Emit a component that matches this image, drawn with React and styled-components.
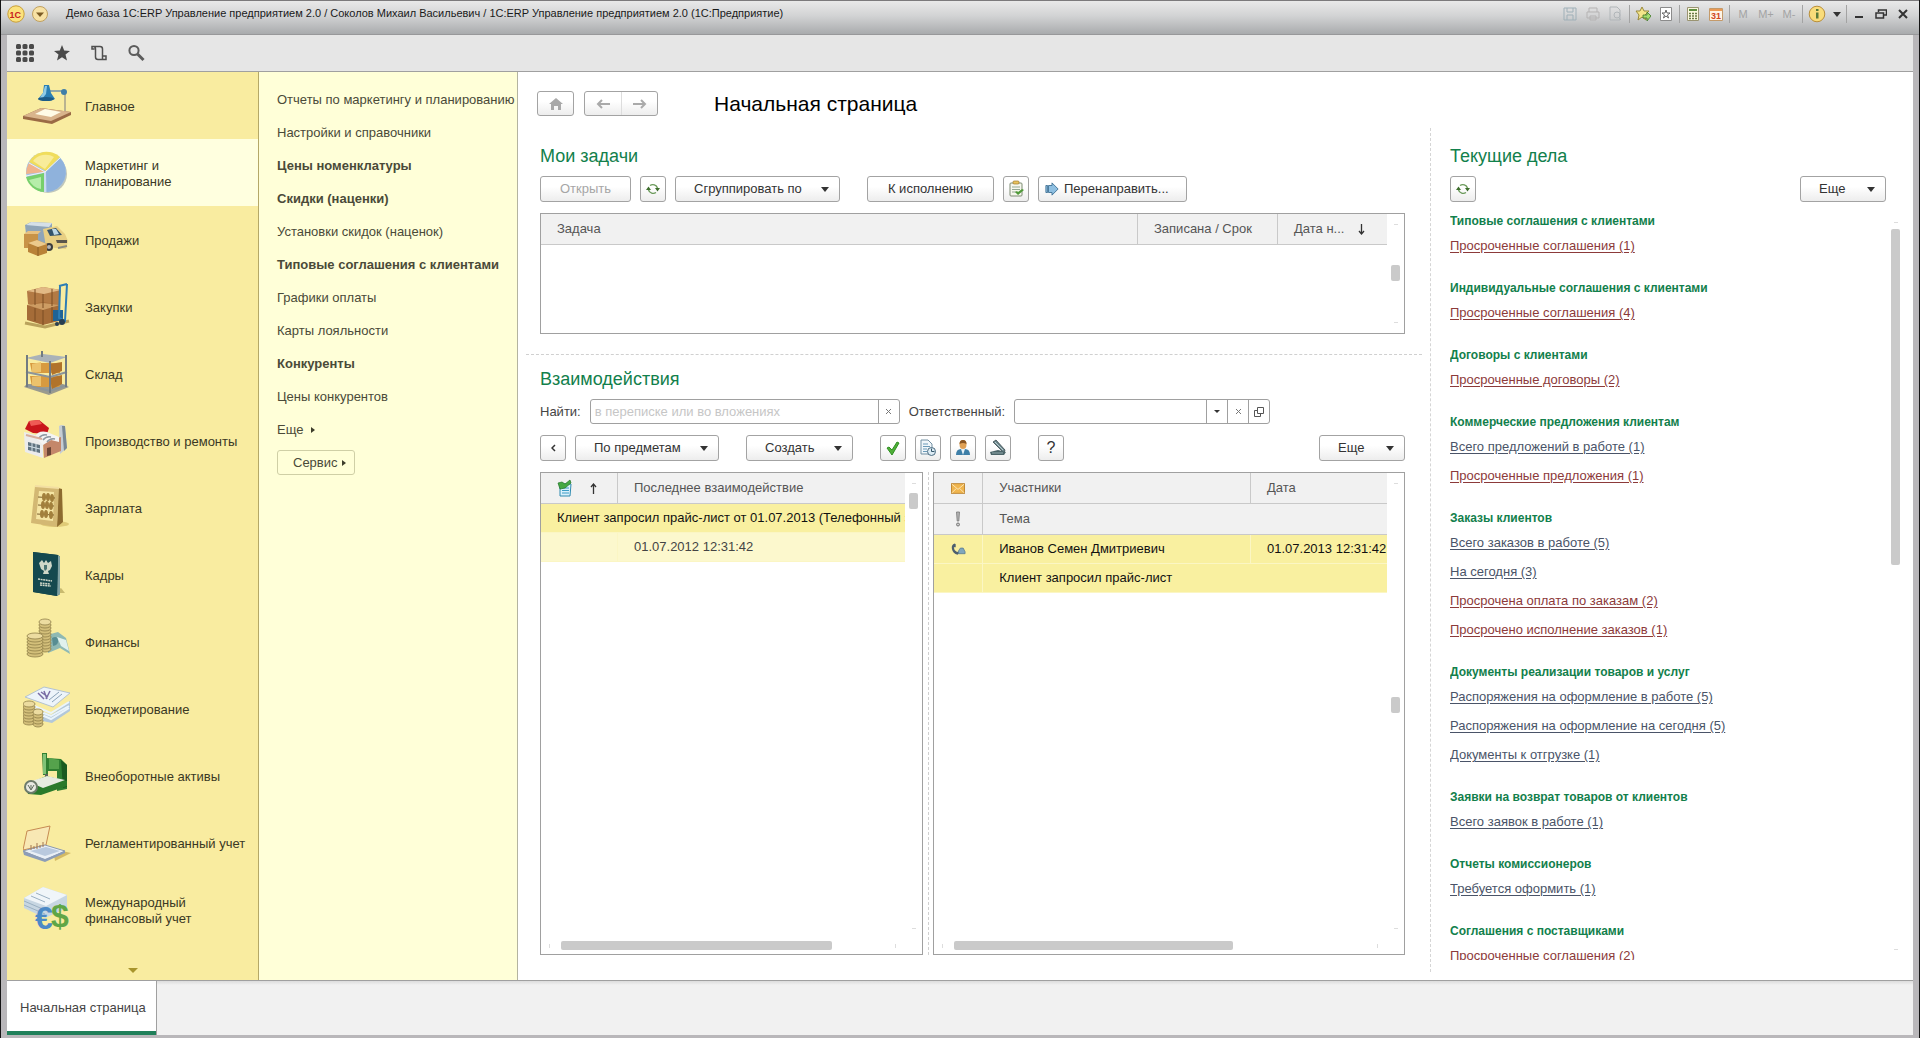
import React from 'react';
import styled, { createGlobalStyle } from 'styled-components';

/* ---------- section icons ---------- */

const LampIcon = () => (
  <svg viewBox="0 0 48 48" width="48" height="48">
    <path d="M0 34 L18 26 L48 30 L48 33 L29 42 L0 37z" fill="#9a6a45" />
    <path d="M0 34 L18 26 L48 30 L28 39z" fill="#d9b48c" />
    <path d="M12 32 L22 27 L38 30 L28 35z" fill="#fffbe6" />
    <path d="M42 12v17" stroke="#a3a08c" strokeWidth="1.500" />
    <path d="M26 9h14" stroke="#7193ab" strokeWidth="1.500" />
    <circle cx="41" cy="10" r="3" fill="#3f7ea8" />
    <path d="M21 3h5l2 8 4 6q-8 4-17 0l5-6z" fill="#2a7fb4" />
    <path d="M22 4h2l-1 8-4 5h-3l4-6z" fill="#8fcbe6" />
    <ellipse cx="23" cy="17" rx="8" ry="2" fill="#1d5c88" />
  </svg>
);

const PieIcon = () => (
  <svg viewBox="0 0 48 48" width="48" height="48">
    <ellipse cx="25" cy="25" rx="19" ry="19" fill="#7f8e98" opacity="0.500" />
    <circle cx="23" cy="23" r="20" fill="#a7c4e6" />
    <path d="M23 23 L37 9 A20 20 0 0 1 24 43z" fill="#8fb2dc" />
    <path d="M23 22 L6 13 A20 20 0 0 1 37 8z" fill="#f0dd5c" />
    <path d="M22 20 L10 12 A16 16 0 0 1 31 8z" fill="#f8ec9a" />
    <path d="M22 23 L6 14 Q3 19 3 25z" fill="#f0b38c" />
    <path d="M21 24 L3 28 A20 20 0 0 0 21 43z" fill="#77cf6b" />
    <path d="M18 28 L6 31 A16 16 0 0 0 18 40z" fill="#b6edaa" />
    <path d="M22 23 L37 9M22 23v20M22 23 L6 14M22 23 L3 27" stroke="#fff" strokeWidth="1" opacity="0.8" />
  </svg>
);

const TruckIcon = () => (
  <svg viewBox="0 0 48 48" width="48" height="48">
    <path d="M2 9 L8 6 L29 7 L29 30 L4 27z" fill="#8fa5b8" />
    <path d="M8 6 L29 7 L26 11 L3 9z" fill="#d5e0e8" />
    <path d="M20 13 L34 10 L42 18 L45 25 L43 33 L23 31z" fill="#e8cf83" />
    <path d="M24 14 L33 12 L39 19 L27 20z" fill="#33536b" />
    <path d="M29 13l4 0 3 5-5 1z" fill="#bcd7e6" />
    <path d="M33 24h11v3H34z" fill="#5a564c" />
    <circle cx="26" cy="31" r="4" fill="#3c3c3c" />
    <circle cx="26" cy="31" r="2" fill="#b5b5b5" />
    <path d="M35 32l9-2" stroke="#8c8c80" strokeWidth="2" />
    <path d="M1 18h14v14H1z" fill="#c89347" />
    <path d="M1 18l4-3h13l-3 3z" fill="#e8c17f" />
    <path d="M5 27 L14 24 L24 28 L24 37 L15 40 L5 36z" fill="#b98238" />
    <path d="M5 27 L14 24 L24 28 L15 31z" fill="#ecca8c" />
    <path d="M15 31v9" stroke="#8c5f24" />
  </svg>
);

const BoxesIcon = () => (
  <svg viewBox="0 0 48 48" width="48" height="48">
    <path d="M2 40 L22 44 L46 38" stroke="#b9a25c" strokeWidth="3" fill="none" />
    <path d="M4 8 L20 4 L38 7 L36 22 L20 25 L5 21z" fill="#b37a44" />
    <path d="M4 8 L20 4 L38 7 L21 11z" fill="#e2b985" />
    <path d="M4 22 L20 19 L37 22 L36 38 L20 42 L4 37z" fill="#a56c38" />
    <path d="M4 22 L20 20 L37 22 L20 27z" fill="#cd9c63" />
    <path d="M20 11v14M20 27v15M12 6v16M12 25v13M29 6v17M29 24v15" stroke="#7b4c22" strokeWidth="1" />
    <path d="M30 27h10v11H30z" fill="#1f6396" />
    <path d="M36 3l8-2M37 3l-1 32 6 3 2-37" stroke="#2d7db5" strokeWidth="2" fill="none" />
    <circle cx="39" cy="39" r="3" fill="#283e50" />
    <circle cx="34" cy="41" r="2" fill="#283e50" />
  </svg>
);

const ShelfIcon = () => (
  <svg viewBox="0 0 48 48" width="48" height="48">
    <path d="M1 37 L26 45 L46 37 L40 34 L4 34z" fill="#9a9a8e" />
    <path d="M7 13h30v10H9zM7 26h30v11H9z" fill="#d79a3f" />
    <path d="M9 14 L18 12 L18 22 L9 23zM9 27 L18 26 L18 36 L9 36z" fill="#ecc26c" />
    <path d="M27 14l12-2v9l-10 4zM27 28l12-3v9l-10 5z" fill="#b1732a" />
    <path d="M3 8 L20 4 L44 7 L27 13z" fill="#aab2b8" />
    <path d="M3 22 L27 27 L44 22M3 35 L27 41 L44 35" stroke="#8b949a" strokeWidth="2" fill="none" />
    <path d="M4 5v32M27 11v32M43 5v32M19 1v6" stroke="#717b82" strokeWidth="2" />
  </svg>
);

const FactoryIcon = () => (
  <svg viewBox="0 0 48 48" width="48" height="48">
    <path d="M36 9q3-2 6 0l2 22-7 6z" fill="#c6cdd4" />
    <path d="M39 9h3l2 22-3 3z" fill="#7a8893" />
    <path d="M1 15 L20 20 L20 41 L2 35z" fill="#ececec" />
    <path d="M20 25 L38 20 L38 34 L21 41z" fill="#c4876a" />
    <path d="M2 12 L6 4 L16 3 L26 11 L24 17 L10 16z" fill="#c9151b" />
    <path d="M6 4 L16 3 L19 7 L8 9z" fill="#ef5a55" />
    <path d="M12 20q3-7 12-5l12 5v5l-8-2-8 5z" fill="#f4f4f4" />
    <path d="M16 21q3-4 8-3M20 23q3-4 8-3M24 25q3-4 8-3" stroke="#8d97a1" fill="none" strokeWidth="1.5" />
    <path d="M5 25l12 3v8L5 33z" fill="#60737f" />
    <path d="M9 26v8M13 27v8M5 29l12 3" stroke="#d5e2ea" />
    <path d="M3 18l16 4" stroke="#d8ad9a" strokeWidth="2" />
    <path d="M24 31l4-1v8l-4 1z" fill="#6b4536" />
  </svg>
);

const AbacusIcon = () => (
  <svg viewBox="0 0 48 48" width="48" height="48">
    <ellipse cx="32" cy="40" rx="14" ry="3" fill="#c7a94e" opacity="0.5" />
    <path d="M35 4 L39 5 L40 38 L34 43z" fill="#8d6b2f" />
    <path d="M12 2 L36 4 L34 43 L8 39z" fill="#d3b873" />
    <path d="M16 7 L31 8 L30 37 L13 35z" fill="#f5e5a3" />
    <path d="M12 2 L36 4" stroke="#f3dfa2" strokeWidth="2" />
    <path d="M15 13l17 1M15 21l16 1M14 30l17 1" stroke="#7b5f2d" />
    <g fill="#a2803c">
      <ellipse cx="21" cy="13" rx="2" ry="4" /><ellipse cx="25" cy="13" rx="2" ry="4" /><ellipse cx="29" cy="14" rx="2" ry="4" />
      <ellipse cx="20" cy="21" rx="2" ry="4" /><ellipse cx="24" cy="21" rx="2" ry="4" /><ellipse cx="28" cy="22" rx="2" ry="4" />
      <ellipse cx="19" cy="30" rx="2" ry="4" /><ellipse cx="23" cy="30" rx="2" ry="4" /><ellipse cx="28" cy="31" rx="2" ry="4" />
    </g>
  </svg>
);

const PassportIcon = () => (
  <svg viewBox="0 0 48 48" width="48" height="48">
    <path d="M30 42l12 0-4-5z" fill="#a9994e" opacity="0.6" />
    <path d="M10 1 L35 4 L37 6 L37 43 L34 45 L10 41z" fill="#0f3f45" />
    <path d="M35 4l2 2v37l-3 2z" fill="#7fa0a0" />
    <path d="M10 1 L35 4 L34 45 L10 41z" fill="#15494f" />
    <path d="M16 12l3-3 2 3 2-3 2 3 3-2 1 5-2 4-2 1 1 3h-6l1-3-3-2z" fill="#cfd7c8" />
    <path d="M21 14h3v4l-2 2-1-2z" fill="#4a7472" />
    <path d="M15 28l14 2M17 32l10 1M17 34l11 1" stroke="#cfd7c8" strokeWidth="1.5" strokeDasharray="2 0.6" />
  </svg>
);

const Coins = ({ x, y, count, rx = 7 }) => (
  <g>
    {Array.from({ length: count }, (_, i) => (
      <ellipse key={i} cx={x} cy={y - i * 3} rx={rx} ry="3" fill={i === count - 1 ? '#ecdca0' : '#d3bf7a'} stroke="#8f7f47" strokeWidth="0.8" />
    ))}
  </g>
);

const FinanceIcon = () => (
  <svg viewBox="0 0 48 48" width="48" height="48">
    <path d="M24 17 L35 14 L43 20 L47 36 L37 30 L25 35z" fill="#8fb9b3" />
    <path d="M34 19l9 3 3 11-8-5z" fill="#e1f1ee" />
    <path d="M29 20q5-3 6 2t-5 6z" fill="#578d92" />
    <Coins x={22} y={31} count={10} rx={6} />
    <Coins x={12} y={36} count={7} rx={8} />
  </svg>
);

const BudgetIcon = () => (
  <svg viewBox="0 0 48 48" width="48" height="48">
    <path d="M4 20 L28 30 L47 16 L47 26 L29 38 L10 34z" fill="#b3c8da" />
    <path d="M6 19l22 9 18-11M8 23l20 8 18-10M12 27l16 7 18-11" stroke="#eaf4fb" strokeWidth="2" fill="none" />
    <path d="M2 12 L21 2 L47 8 L30 22z" fill="#edf4fa" stroke="#b3c3d2" />
    <path d="M15 8l6 6M18 7l7 5M21 6l3 8M27 6l-4 8" stroke="#7a6da5" strokeWidth="1.5" />
    <path d="M26 15l10-8M29 17l10-8" stroke="#8aa2b8" />
    <Coins x={6} y={37} count={7} rx={6} />
    <Coins x={15} y={39} count={5} rx={5} />
  </svg>
);

const MachineIcon = () => (
  <svg viewBox="0 0 48 48" width="48" height="48">
    <path d="M19 1h5v5l14 1 6 6v24l-10 2V19h-9v4h-5z" fill="#2f7f31" />
    <path d="M20 2h3v20h-3z" fill="#80c277" />
    <path d="M26 6l10 2v9h-10z" fill="#55a24c" />
    <path d="M38 8l6 5v22l-4 1z" fill="#1c5a20" />
    <path d="M22 22h3v6h-3z" fill="#5f625c" />
    <path d="M3 33 L23 24 L44 29 L44 34 L18 43 L5 42z" fill="#2a7a2b" />
    <path d="M6 30 L24 24 L42 28 L20 36z" fill="#e6ebe0" />
    <circle cx="8" cy="35" r="6" fill="#e8e8e2" stroke="#6d7b6b" strokeWidth="2" />
    <path d="M5 33l3 5 3-5M8 33v4" stroke="#5d6b5c" fill="none" />
  </svg>
);

const ScannerIcon = () => (
  <svg viewBox="0 0 48 48" width="48" height="48">
    <path d="M30 30 L48 34 L32 42z" fill="#bb9a3e" opacity="0.6" />
    <path d="M0 31 L4 12 L27 7 L23 26z" fill="#f8e8b4" stroke="#c68a52" />
    <path d="M0 32 L22 26 L42 32 L22 41z" fill="#e9eff6" stroke="#8a98ad" />
    <path d="M0 32 L1 36 L22 43 L42 34 L42 32 L22 40z" fill="#8c9db8" />
    <path d="M7 32l16-4 14 4-15 5z" fill="#b9c9de" />
    <path d="M8 31v-5M11 30v-3M14 30v-6M17 29v-3M20 28v-5" stroke="#a3764e" />
  </svg>
);

const CurrencyIcon = () => (
  <svg viewBox="0 0 48 48" width="48" height="48">
    <path d="M1 12 L20 1 L44 9 L44 22 L22 32 L1 22z" fill="#c7d6e2" />
    <path d="M1 12 L20 1 L44 9 L23 20z" fill="#f0f5f9" />
    <path d="M1 15l21 9M1 19l21 9M8 10l14 6M13 7l14 6" stroke="#9ab0c2" />
    <text x="28" y="41" fontSize="32" fontWeight="700" fontFamily="Liberation Sans, sans-serif" fill="#5fa646">$</text>
    <text x="12" y="43" fontSize="32" fontWeight="700" fontFamily="Liberation Sans, sans-serif" fill="#4c89c6">€</text>
  </svg>
);

/* ---------- toolbar icons ---------- */

const Caret = () => (
  <svg viewBox="0 0 8 5" width="8" height="5"><path d="M0 0h8L4 5z" fill="#333" /></svg>
);

const RefreshIcon = () => (
  <svg viewBox="0 0 16 16" width="16" height="16">
    <path d="M5 4.500A5 5 0 0 1 12.500 7M11 11.500A5 5 0 0 1 3.500 9" stroke="#6b9a5a" strokeWidth="1.400" fill="none" />
    <path d="M10 7h5l-2.500 3.500zM1 9h5L3.500 5.500z" fill="#3f6f2e" />
  </svg>
);

const ClipboardIcon = () => (
  <svg viewBox="0 0 18 18" width="18" height="18">
    <rect x="3" y="3" width="12" height="13" rx="1" fill="#f6f8ee" stroke="#7c8a72" />
    <rect x="6" y="1" width="6" height="3" rx="1" fill="#e9c35f" stroke="#9d7d2a" strokeWidth="0.7" />
    <path d="M5 7h8M5 9.500h8M5 12h4" stroke="#93a892" />
    <path d="M8 12l3 3 6-5-2-1-4 3-1-1z" fill="#4f9a39" />
  </svg>
);

const ForwardIcon = () => (
  <svg viewBox="0 0 16 16" width="14" height="14">
    <path d="M1 4h2v8H1zM4 4h4V1l7 7-7 7v-3H4z" fill="#8fc0e2" stroke="#3d6f94" />
  </svg>
);

const CheckIcon = () => (
  <svg viewBox="0 0 18 18" width="18" height="18">
    <path d="M3 9l2-1 3 3 5-8 2 1-7 12z" fill="#4faf37" stroke="#2f8f22" />
  </svg>
);

const DocClockIcon = () => (
  <svg viewBox="0 0 18 18" width="18" height="18">
    <path d="M2 1h7l4 4v10H2z" fill="#f0f6fa" stroke="#7390a3" />
    <path d="M4 5h5M4 7.500h7M4 10h4M4 12.500h4" stroke="#6b9ab8" />
    <circle cx="12.500" cy="12.500" r="4" fill="#dcebf4" stroke="#4b6b80" />
    <path d="M12.500 9.500v3h3" stroke="#33566b" fill="none" />
  </svg>
);

const PersonIcon = () => (
  <svg viewBox="0 0 18 18" width="18" height="18">
    <path d="M2 16q0-6 5-6h4q5 0 5 6z" fill="#3e7fa8" />
    <path d="M7 10l2 6 2-6z" fill="#e5f1f8" />
    <ellipse cx="9" cy="5.500" rx="3.500" ry="4.500" fill="#e0a155" />
    <path d="M5.500 5q0-4 3.500-4t3.500 4q-3.500-2-7 0z" fill="#8a5623" />
  </svg>
);

const StaplerIcon = () => (
  <svg viewBox="0 0 18 18" width="18" height="18">
    <path d="M4 3l3-2 9 10-1 3z" fill="#6b858b" stroke="#38494d" strokeWidth="0.800" />
    <path d="M6 3l8 8" stroke="#b9cdd0" />
    <path d="M1 13l8-2 8 2-2 3H2z" fill="#4b6468" />
    <path d="M3 14h11" stroke="#93aaae" />
  </svg>
);

const NoteIcon = () => (
  <svg viewBox="0 0 16 18" width="16" height="18">
    <path d="M3 5h11l-1 12H3z" fill="#d9f0fb" stroke="#2f8bb0" />
    <path d="M5 9h7M5 11.500h7M5 14h7" stroke="#3a9cc6" />
    <path d="M1 4l4-1 3 2 5-4 1 3-6 5-5 1z" fill="#45a843" stroke="#23742a" strokeWidth="0.700" />
  </svg>
);

const MailIcon = () => (
  <svg viewBox="0 0 16 12" width="14" height="11">
    <rect x="0.500" y="0.500" width="15" height="11" fill="#f0b54e" stroke="#b9802b" />
    <path d="M1 1l7 6 7-6M1 11l5-5M15 11l-5-5" stroke="#fdeabf" fill="none" />
  </svg>
);

const AlertIcon = () => (
  <svg viewBox="0 0 8 16" width="8" height="16">
    <path d="M2.500 1h3L4.800 10H3.200z" fill="#b3b3b3" stroke="#777" strokeWidth="0.800" />
    <circle cx="4" cy="13.500" r="1.500" fill="#ccc" stroke="#777" />
  </svg>
);

const PhoneIcon = () => (
  <svg viewBox="0 0 16 14" width="15" height="14">
    <path d="M4 1Q0 2 1 7t6 6l2-2-2-1-1 0Q3 8 3 5l2 0V2z" fill="#4d5f6e" />
    <path d="M8 12V9l2-3h3l2 4v2z" fill="#7fa6bd" stroke="#54788d" strokeWidth="0.800" />
  </svg>
);

const HomeIcon = () => (
  <svg viewBox="0 0 14 12" width="14" height="12"><path d="M7 0l7 6h-2v6H9V8H5v4H2V6H0z" fill="#a9a9a9" /></svg>
);

const ArrowIcon = ({ back }) => (
  <svg viewBox="0 0 14 10" width="14" height="10">
    <path d={back ? 'M14 5H2M6 1L2 5l4 4' : 'M0 5h12M8 1l4 4-4 4'} stroke="#aaa" strokeWidth="2" fill="none" />
  </svg>
);

const SortIcon = ({ down }) => (
  <svg viewBox="0 0 7 11" width="7" height="11">
    <path d={down ? 'M3.500 0v10M1 7l2.500 3L6 7' : 'M3.500 11V1M1 4l2.500-3L6 4'} stroke="#333" strokeWidth="1.300" fill="none" />
  </svg>
);

const CrossIcon = () => (
  <svg viewBox="0 0 7 7" width="7" height="7"><path d="M1 1l5 5M6 1L1 6" stroke="#777" /></svg>
);

const OpenIcon = () => (
  <svg viewBox="0 0 10 10" width="10" height="10">
    <path d="M3.500 0.500h6v6h-6zM3 3.500H0.500v6h6V7" stroke="#555" fill="none" />
  </svg>
);

const RightMark = () => (
  <svg viewBox="0 0 4 6" width="4" height="6"><path d="M0 0l4 3-4 3z" fill="#3d3d2b" /></svg>
);

const GridIcon = () => (
  <svg viewBox="0 0 18 18" width="18" height="18" fill="#4a4a4a">
    {[0, 6.5, 13].map((y) => [0, 6.5, 13].map((x) => <rect key={`${x}-${y}`} x={x} y={y} width="5" height="5" rx="1.500" />))}
  </svg>
);

const StarIcon = () => (
  <svg viewBox="0 0 18 18" width="18" height="18">
    <path d="M9 1l2.200 5.500 5.800 .4-4.500 3.700L14 16.500 9 13.200 4 16.500l1.500-5.900L1 6.900l5.800-.4z" fill="#4a4a4a" />
  </svg>
);

const ScrollIcon = () => (
  <svg viewBox="0 0 18 18" width="18" height="18">
    <path d="M4.500 5H2V2.500h8q2.500 0 2.500 2.500v7H16v3.500H8q-2.500 0-2.500-2.500V5q0-2.500-2-2.500M12.500 12v3" stroke="#4f4f4f" strokeWidth="1.500" fill="none" />
  </svg>
);

const SearchIcon = () => (
  <svg viewBox="0 0 18 18" width="18" height="18">
    <circle cx="7" cy="6.500" r="4.600" stroke="#5c5c5c" strokeWidth="2" fill="none" />
    <path d="M10.500 10l6 6" stroke="#5c5c5c" strokeWidth="3" />
  </svg>
);

/* ---------- title bar icons ---------- */

const LogoIcon = () => (
  <svg viewBox="0 0 18 18" width="18" height="18">
    <circle cx="9" cy="9" r="8.200" fill="#fbe27c" stroke="#c99f38" />
    <text x="2.500" y="12.500" fontSize="9" fontWeight="700" fontFamily="Liberation Sans, sans-serif" fill="#c8201c">1С</text>
  </svg>
);

const MenuBubble = () => (
  <svg viewBox="0 0 18 18" width="18" height="18">
    <circle cx="9" cy="9" r="7.500" fill="#f8e2a4" stroke="#c0a060" />
    <path d="M5 7.500h8L9 12z" fill="#7b5b24" />
  </svg>
);

const SaveIcon = () => (
  <svg viewBox="0 0 16 16" width="16" height="16" fill="none" stroke="#9fb0b8">
    <path d="M2 2h12v12H2zM5 2v4h6V2M5 14V9h6v5" />
  </svg>
);

const PrintIcon = () => (
  <svg viewBox="0 0 16 16" width="16" height="16" fill="none" stroke="#b5b3b3">
    <path d="M4 6V2h8v4M2 6h12v6H2zM5 10h6v4H5z" />
  </svg>
);

const PreviewIcon = () => (
  <svg viewBox="0 0 16 16" width="16" height="16" fill="none" stroke="#b1b6b9">
    <path d="M2 1h7l3 3v10H2zM13 14l-3-3" /><circle cx="9" cy="9" r="3" />
  </svg>
);

const FavAddIcon = () => (
  <svg viewBox="0 0 16 16" width="16" height="16">
    <path d="M7 1l2 4 5 0-4 4 1 5-4-3-4 3 1-5-3-4h4z" fill="#f5e58a" stroke="#9a8a3a" />
    <path d="M8 9h4V6l4 4-4 5v-3H8z" fill="#a5dc6f" stroke="#3c7724" strokeWidth="0.800" />
  </svg>
);

const FavListIcon = () => (
  <svg viewBox="0 0 16 16" width="16" height="16">
    <path d="M2.500 1.500h11v13h-11z" fill="#fff" stroke="#8b8b8b" />
    <path d="M8 4l1 3h3L9.500 9l1 3L8 10l-2.500 2 1-3L4 7h3z" fill="none" stroke="#666" />
  </svg>
);

const CalcIcon = () => (
  <svg viewBox="0 0 16 16" width="16" height="16">
    <path d="M2.500 1.500h11v13h-11z" fill="#fbf8df" stroke="#9a9472" />
    <path d="M4 4h8" stroke="#5f8f3f" strokeWidth="2" />
    <path d="M4 7.500h8M4 10h8M4 12.500h8" stroke="#6a7a45" strokeWidth="1.500" strokeDasharray="2 1" />
  </svg>
);

const CalendarIcon = () => (
  <svg viewBox="0 0 16 16" width="16" height="16">
    <path d="M1.500 2.500h13v12h-13z" fill="#fff5e6" stroke="#c49a6a" />
    <path d="M2 3h12v2H2z" fill="#eb9a55" />
    <text x="3" y="13" fontSize="9" fontWeight="700" fontFamily="Liberation Sans, sans-serif" fill="#d0471e">31</text>
  </svg>
);

const InfoIcon = () => (
  <svg viewBox="0 0 18 18" width="18" height="18">
    <circle cx="9" cy="9" r="7.800" fill="#f9dc7a" stroke="#b98f3a" />
    <path d="M8 7.500h2.500v6H8zM8 4h2.500v2H8z" fill="#5a7a3a" />
  </svg>
);

/* ---------- data ---------- */

const sections = [
  { label: 'Главное', Icon: LampIcon },
  { label: 'Маркетинг и\nпланирование', Icon: PieIcon, active: true },
  { label: 'Продажи', Icon: TruckIcon },
  { label: 'Закупки', Icon: BoxesIcon },
  { label: 'Склад', Icon: ShelfIcon },
  { label: 'Производство и ремонты', Icon: FactoryIcon },
  { label: 'Зарплата', Icon: AbacusIcon },
  { label: 'Кадры', Icon: PassportIcon },
  { label: 'Финансы', Icon: FinanceIcon },
  { label: 'Бюджетирование', Icon: BudgetIcon },
  { label: 'Внеоборотные активы', Icon: MachineIcon },
  { label: 'Регламентированный учет', Icon: ScannerIcon },
  { label: 'Международный\nфинансовый учет', Icon: CurrencyIcon },
];

const commands = [
  { label: 'Отчеты по маркетингу и планированию' },
  { label: 'Настройки и справочники' },
  { label: 'Цены номенклатуры', bold: true },
  { label: 'Скидки (наценки)', bold: true },
  { label: 'Установки скидок (наценок)' },
  { label: 'Типовые соглашения с клиентами', bold: true },
  { label: 'Графики оплаты' },
  { label: 'Карты лояльности' },
  { label: 'Конкуренты', bold: true },
  { label: 'Цены конкурентов' },
];

const todo = [
  { title: 'Типовые соглашения с клиентами', links: [['Просроченные соглашения (1)', true]] },
  { title: 'Индивидуальные соглашения с клиентами', links: [['Просроченные соглашения (4)', true]] },
  { title: 'Договоры с клиентами', links: [['Просроченные договоры (2)', true]] },
  {
    title: 'Коммерческие предложения клиентам',
    links: [['Всего предложений в работе (1)'], ['Просроченные предложения (1)', true]],
  },
  {
    title: 'Заказы клиентов',
    links: [
      ['Всего заказов в работе (5)'],
      ['На сегодня (3)'],
      ['Просрочена оплата по заказам (2)', true],
      ['Просрочено исполнение заказов (1)', true],
    ],
  },
  {
    title: 'Документы реализации товаров и услуг',
    links: [
      ['Распоряжения на оформление в работе (5)'],
      ['Распоряжения на оформление на сегодня (5)'],
      ['Документы к отгрузке (1)'],
    ],
  },
  { title: 'Заявки на возврат товаров от клиентов', links: [['Всего заявок в работе (1)']] },
  { title: 'Отчеты комиссионеров', links: [['Требуется оформить (1)']] },
  { title: 'Соглашения с поставщиками', links: [['Просроченные соглашения (2)', true]] },
];

/* ---------- page ---------- */

const App = () => {
  return (
    <Window>
      <GlobalStyle />
      <TitleBar>
        <LogoIcon />
        <MenuBubble />
        <WindowTitle>
          Демо база 1С:ERP Управление предприятием 2.0 / Соколов Михаил Васильевич / 1С:ERP Управление предприятием 2.0{' '}
          (1С:Предприятие)
        </WindowTitle>
        <TitleTools>
          <ToolGroup><SaveIcon /><PrintIcon /><PreviewIcon /></ToolGroup>
          <ToolGroup><FavAddIcon /><FavListIcon /></ToolGroup>
          <ToolGroup><CalcIcon /><CalendarIcon /></ToolGroup>
          <ToolGroup><Memory>M</Memory><Memory>M+</Memory><Memory>M-</Memory></ToolGroup>
          <ToolGroup><InfoIcon /><Caret /></ToolGroup>
          <ToolGroup>
            <WindowButton aria-label="Свернуть">
              <svg viewBox="0 0 10 10" width="10" height="10"><path d="M1 8h8" stroke="#333" strokeWidth="2" /></svg>
            </WindowButton>
            <WindowButton aria-label="Развернуть">
              <svg viewBox="0 0 12 10" width="12" height="10">
                <path d="M3.500 3V1h8v5H9M1 4h7.500v5H1z" stroke="#333" strokeWidth="1.500" fill="none" />
              </svg>
            </WindowButton>
            <WindowButton aria-label="Закрыть">
              <svg viewBox="0 0 10 10" width="10" height="10"><path d="M1 1l8 8M9 1L1 9" stroke="#333" strokeWidth="2" /></svg>
            </WindowButton>
          </ToolGroup>
        </TitleTools>
      </TitleBar>

      <Frame>
        <MainTools>
          <PlainButton aria-label="Разделы"><GridIcon /></PlainButton>
          <PlainButton aria-label="Избранное"><StarIcon /></PlainButton>
          <PlainButton aria-label="История"><ScrollIcon /></PlainButton>
          <PlainButton aria-label="Поиск"><SearchIcon /></PlainButton>
        </MainTools>

        <Workspace>
          <Sections>
            {sections.map(({ label, Icon, active }) => (
              <Section key={label} href="#" $active={active}>
                <Icon />
                <SectionLabel>{label}</SectionLabel>
              </Section>
            ))}
            <MoreSections aria-label="Еще разделы">
              <svg viewBox="0 0 10 5" width="10" height="5"><path d="M0 0h10L5 5z" fill="#a8942c" /></svg>
            </MoreSections>
          </Sections>

          <Commands>
            {commands.map(({ label, bold }) => (
              <Command key={label} href="#" $bold={bold}>{label}</Command>
            ))}
            <Command href="#">Еще <RightMark /></Command>
            <ServiceButton>Сервис <RightMark /></ServiceButton>
          </Commands>

          <Content>
            <NavRow>
              <HomeButton aria-label="Домой"><HomeIcon /></HomeButton>
              <NavPair>
                <NavButton aria-label="Назад"><ArrowIcon back /></NavButton>
                <NavButton aria-label="Вперед"><ArrowIcon /></NavButton>
              </NavPair>
              <PageTitle>Начальная страница</PageTitle>
            </NavRow>

            <Panels>
              <LeftPanel>
                <Block>
                  <Heading>Мои задачи</Heading>
                  <Bar>
                    <Button $width={91} disabled>Открыть</Button>
                    <IconButton aria-label="Обновить"><RefreshIcon /></IconButton>
                    <MenuButton $width={165}>Сгруппировать по <Caret /></MenuButton>
                    <Gap />
                    <Button $width={127}>К исполнению</Button>
                    <IconButton aria-label="Выполнено"><ClipboardIcon /></IconButton>
                    <ForwardButton $width={149}><ForwardIcon /> Перенаправить...</ForwardButton>
                  </Bar>
                  <TasksBox>
                    <GridArea>
                      <Table>
                        <colgroup><col /><Col $width={140} /><Col $width={109} /></colgroup>
                        <thead>
                          <tr>
                            <Th>Задача</Th>
                            <Th>Записана / Срок</Th>
                            <Th><HeadSort>Дата н... <SortIcon down /></HeadSort></Th>
                          </tr>
                        </thead>
                      </Table>
                    </GridArea>
                    <Track><TrackMark /><Thumb $top={36} /><TrackMark $end /></Track>
                  </TasksBox>
                </Block>

                <Separator />

                <Block $grow>
                  <Heading>Взаимодействия</Heading>
                  <FilterBar>
                    <FieldLabel htmlFor="find">Найти:</FieldLabel>
                    <Field $width={310}>
                      <Input id="find" placeholder="в переписке или во вложениях" />
                      <FieldButton aria-label="Очистить поиск"><CrossIcon /></FieldButton>
                    </Field>
                    <FieldLabel htmlFor="owner">Ответственный:</FieldLabel>
                    <Field $width={256}>
                      <Input id="owner" />
                      <FieldButton aria-label="Выбрать"><svg viewBox="0 0 6 3" width="6" height="3"><path d="M0 0h6L3 3z" fill="#333" /></svg></FieldButton>
                      <FieldButton aria-label="Очистить"><CrossIcon /></FieldButton>
                      <FieldButton aria-label="Открыть"><OpenIcon /></FieldButton>
                    </Field>
                  </FilterBar>
                  <Bar>
                    <IconButton aria-label="Скрыть">
                      <svg viewBox="0 0 5 8" width="5" height="8"><path d="M4 1L1 4l3 3" stroke="#333" strokeWidth="1.500" fill="none" /></svg>
                    </IconButton>
                    <MenuButton $width={144}>По предметам <Caret /></MenuButton>
                    <Gap />
                    <MenuButton $width={107}>Создать <Caret /></MenuButton>
                    <Gap />
                    <IconButton aria-label="Рассмотрено"><CheckIcon /></IconButton>
                    <IconButton aria-label="Рассмотреть после"><DocClockIcon /></IconButton>
                    <IconButton aria-label="Ответственный"><PersonIcon /></IconButton>
                    <IconButton aria-label="Вложения"><StaplerIcon /></IconButton>
                    <Gap />
                    <IconButton>?</IconButton>
                    <Spring />
                    <MenuButton $width={86}>Еще <Caret /></MenuButton>
                  </Bar>
                  <Lists>
                    <ListBox>
                      <ListBody>
                        <GridArea>
                          <Table>
                            <colgroup><Col $width={77} /><col /></colgroup>
                            <thead>
                              <tr>
                                <Th><HeadIcons><NoteIcon /><SortIcon /></HeadIcons></Th>
                                <Th>Последнее взаимодействие</Th>
                              </tr>
                            </thead>
                            <tbody>
                              <tr><Td colSpan={2} $tone="strong">Клиент запросил прайс-лист от 01.07.2013 (Телефонный звонок)</Td></tr>
                              <tr><Td /><Td>01.07.2012 12:31:42</Td></tr>
                            </tbody>
                          </Table>
                        </GridArea>
                        <Track><TrackMark /><Thumb $top={5} /><TrackMark $end /></Track>
                      </ListBody>
                      <HTrack><HMark /><HThumb $share={78} /><HMark $end /></HTrack>
                    </ListBox>
                    <Splitter />
                    <ListBox>
                      <ListBody>
                        <GridArea>
                          <Table>
                            <colgroup><Col $width={49} /><col /><Col $width={136} /></colgroup>
                            <thead>
                              <tr><Th $center><MailIcon /></Th><Th>Участники</Th><Th>Дата</Th></tr>
                              <tr><Th $center><AlertIcon /></Th><Th colSpan={2}>Тема</Th></tr>
                            </thead>
                            <tbody>
                              <tr>
                                <Td $tone="strong" $center><PhoneIcon /></Td>
                                <Td $tone="strong">Иванов Семен Дмитриевич</Td>
                                <Td $tone="strong">01.07.2013 12:31:42</Td>
                              </tr>
                              <tr><Td $tone="strong" /><Td $tone="strong" colSpan={2}>Клиент запросил прайс-лист</Td></tr>
                            </tbody>
                          </Table>
                        </GridArea>
                        <Track><TrackMark /><Thumb $top={209} /><TrackMark $end /></Track>
                      </ListBody>
                      <HTrack><HMark /><HThumb $share={64} /><HMark $end /></HTrack>
                    </ListBox>
                  </Lists>
                </Block>
              </LeftPanel>

              <RightPanel>
                <Heading>Текущие дела</Heading>
                <TodoBar>
                  <IconButton aria-label="Обновить"><RefreshIcon /></IconButton>
                  <MenuButton $width={86}>Еще <Caret /></MenuButton>
                </TodoBar>
                <TodoArea>
                  <TodoList>
                    {todo.map(({ title, links }) => (
                      <TodoGroup key={title}>
                        <TodoTitle>{title}</TodoTitle>
                        {links.map(([text, overdue]) => (
                          <TodoItem key={text}><TodoLink href="#" $overdue={overdue}>{text}</TodoLink></TodoItem>
                        ))}
                      </TodoGroup>
                    ))}
                  </TodoList>
                  <Track><TrackMark /><Thumb $top={2} $height={336} /><TrackMark $end /></Track>
                </TodoArea>
              </RightPanel>
            </Panels>
          </Content>
        </Workspace>

        <TabBar>
          <Tab>Начальная страница</Tab>
        </TabBar>
      </Frame>
    </Window>
  );
};

const GlobalStyle = createGlobalStyle`
  * {
    box-sizing: border-box;
  }
  body {
    margin: 0;
    font-family: 'Liberation Sans', Arial, sans-serif;
    font-size: 13px;
    line-height: 16px;
    color: #404040;
  }
  button, input {
    font: inherit;
    color: inherit;
  }
  svg {
    display: block;
    flex: none;
  }
`;

const Window = styled.div`
  display: flex;
  flex-direction: column;
  height: 100vh;
  background-color: #b9b7ba;
  border: solid #141414;
  border-width: 0 1px 0 1px;
`;

const TitleBar = styled.header`
  display: flex;
  align-items: flex-start;
  gap: 6px;
  height: 35px;
  padding: 4px 4px 0 6px;
  border-top: 1px solid #7c7a7c;
  border-bottom: 1px solid #98989a;
  background: linear-gradient(#e9e9e9, #d2d3d4 45%, #a9abad);
`;

const WindowTitle = styled.div`
  flex: 1;
  min-width: 0;
  padding-left: 11px;
  font-size: 11px;
  color: #1a1a1a;
  white-space: nowrap;
  overflow: hidden;
`;

const TitleTools = styled.div`
  display: flex;
`;

const ToolGroup = styled.div`
  display: flex;
  align-items: center;
  gap: 7px;
  height: 18px;
  padding: 0 5px;
  & + & {
    border-left: 1px solid #a3a3a3;
  }
`;

const Memory = styled.span`
  width: 16px;
  font-size: 11px;
  text-align: center;
  color: #a3a3a3;
`;

const PlainButton = styled.button`
  display: flex;
  padding: 0;
  border: 0;
  background: none;
`;

const WindowButton = styled(PlainButton)`
  padding: 0 2px;
`;

const Frame = styled.div`
  flex: 1;
  min-height: 0;
  display: flex;
  flex-direction: column;
  margin: 0 6px 3px;
`;

const MainTools = styled.div`
  display: flex;
  align-items: center;
  gap: 19px;
  height: 37px;
  padding-left: 9px;
  background-color: #e6e6e6;
  border-bottom: 1px solid #a0a0a0;
`;

const Workspace = styled.div`
  flex: 1;
  min-height: 0;
  display: flex;
  border-bottom: 1px solid #a0a0a0;
`;

const Sections = styled.nav`
  flex: none;
  width: 252px;
  display: flex;
  flex-direction: column;
  background-color: #f9eca0;
  border-right: 1px solid #b5a868;
  overflow: hidden;
`;

const Section = styled.a`
  flex: none;
  display: flex;
  align-items: center;
  gap: 14px;
  height: 67px;
  padding-left: 16px;
  color: #3a3824;
  text-decoration: none;
  background-color: ${(props) => (props.$active ? '#ffffdf' : 'transparent')};
`;

const SectionLabel = styled.span`
  padding-top: 2px;
  white-space: pre-line;
`;

const MoreSections = styled(PlainButton)`
  flex: 1;
  align-items: center;
  justify-content: center;
  padding-top: 18px;
`;

const Commands = styled.nav`
  flex: none;
  width: 259px;
  display: flex;
  flex-direction: column;
  align-items: flex-start;
  padding: 11px 0 0 18px;
  background-color: #ffffd8;
  border-right: 1px solid #b4b4a0;
`;

const Command = styled.a`
  display: flex;
  align-items: center;
  gap: 8px;
  height: 33px;
  color: #4a4a38;
  font-weight: ${(props) => (props.$bold ? 700 : 400)};
  text-decoration: none;
  white-space: nowrap;
`;

const ServiceButton = styled.button`
  display: flex;
  align-items: center;
  gap: 4px;
  height: 25px;
  margin-top: 4px;
  padding: 0 8px 0 15px;
  border: 1px solid #cfcfa6;
  border-radius: 3px;
  background: none;
  color: #4a4a38;
`;

const Content = styled.main`
  flex: 1;
  min-width: 0;
  display: flex;
  flex-direction: column;
  padding-top: 19px;
  background-color: #fff;
`;

const NavRow = styled.div`
  display: flex;
  align-items: center;
  height: 25px;
  margin-bottom: 12px;
  padding-left: 19px;
`;

const Button = styled.button`
  flex: none;
  display: flex;
  align-items: center;
  justify-content: center;
  width: ${(props) => props.$width}px;
  height: 26px;
  padding: 0;
  border: 1px solid #a3a3a3;
  border-radius: 3px;
  background: linear-gradient(#fff 40%, #ededed);
  color: #333;
  white-space: nowrap;
  &:disabled {
    color: #a6a6a6;
  }
`;

const IconButton = styled(Button)`
  width: 26px;
  font-size: 16px;
`;

const HomeButton = styled(Button)`
  width: 37px;
  height: 25px;
`;

const MenuButton = styled(Button)`
  justify-content: space-between;
  padding: 0 10px 0 18px;
`;

const ForwardButton = styled(Button)`
  justify-content: flex-start;
  gap: 5px;
  padding-left: 6px;
`;

const NavPair = styled.div`
  display: flex;
  height: 25px;
  margin-left: 10px;
  border: 1px solid #a3a3a3;
  border-radius: 3px;
  background: linear-gradient(#fff 40%, #ededed);
`;

const NavButton = styled(PlainButton)`
  width: 36px;
  align-items: center;
  justify-content: center;
  & + & {
    border-left: 1px solid #ddd;
  }
`;

const PageTitle = styled.h1`
  margin: 0 0 0 56px;
  font-size: 21px;
  font-weight: 400;
  line-height: 24px;
  color: #000;
`;

const Panels = styled.div`
  flex: 1;
  min-height: 0;
  display: flex;
`;

const LeftPanel = styled.div`
  flex: 1;
  min-width: 0;
  display: flex;
  flex-direction: column;
  margin-bottom: 8px;
  padding: 16px 8px 17px;
  border-right: 1px dashed #d5d5d5;
`;

const Block = styled.section`
  display: flex;
  flex-direction: column;
  flex: ${(props) => (props.$grow ? '1' : 'none')};
  min-height: 0;
  padding: 0 17px 0 14px;
`;

const Separator = styled.div`
  flex: none;
  margin: 20px 0 12px;
  border-top: 1px dashed #d0d0d0;
`;

const Heading = styled.h2`
  margin: 0 0 8px;
  font-size: 18px;
  font-weight: 400;
  line-height: 24px;
  color: #12804c;
`;

const Bar = styled.div`
  flex: none;
  display: flex;
  gap: 9px;
  margin-bottom: 11px;
`;

const FilterBar = styled(Bar)`
  align-items: center;
`;

const Gap = styled.div`
  width: 9px;
`;

const Spring = styled.div`
  flex: 1;
`;

const TasksBox = styled.div`
  display: flex;
  height: 121px;
  border: 1px solid #a0a0a0;
`;

const GridArea = styled.div`
  flex: 1;
  min-width: 0;
  overflow: hidden;
`;

const Table = styled.table`
  width: 100%;
  table-layout: fixed;
  border-collapse: separate;
  border-spacing: 0;
`;

const Col = styled.col`
  width: ${(props) => props.$width}px;
`;

const Th = styled.th`
  height: 31px;
  padding: ${(props) => (props.$center ? '0' : '0 0 0 16px')};
  background-color: #f1f1f1;
  border: solid #c9c9c9;
  border-width: 0 1px 1px 0;
  font-weight: 400;
  text-align: left;
  white-space: nowrap;
  color: #555;
  &:last-child {
    border-right: 0;
  }
  & > svg {
    margin: ${(props) => (props.$center ? '0 auto' : '0')};
  }
`;

const Td = styled.td`
  height: 29px;
  padding: ${(props) => (props.$center ? '0' : '0 0 0 16px')};
  background-color: ${(props) => (props.$tone === 'strong' ? '#f9f0a0' : '#fcf8cd')};
  border: solid #fbf6c4;
  border-width: 0 1px 1px 0;
  color: ${(props) => (props.$tone === 'strong' ? '#111' : '#444')};
  white-space: nowrap;
  overflow: hidden;
  &:last-child {
    border-right: 0;
  }
  & > svg {
    margin: ${(props) => (props.$center ? '0 auto' : '0')};
  }
`;

const HeadSort = styled.div`
  display: flex;
  align-items: center;
  gap: 14px;
`;

const HeadIcons = styled.div`
  display: flex;
  align-items: center;
  gap: 17px;
`;

const Track = styled.div`
  flex: none;
  width: 17px;
  display: flex;
  flex-direction: column;
  align-items: center;
  padding: 10px 0;
`;

const TrackMark = styled.div`
  width: 4px;
  height: 1px;
  margin-top: ${(props) => (props.$end ? 'auto' : '0')};
  background-color: #ddd;
`;

const Thumb = styled.div`
  flex: none;
  width: 9px;
  height: ${(props) => props.$height || 16}px;
  margin-top: ${(props) => props.$top + 4}px;
  border-radius: 2px;
  background-color: #cacaca;
`;

const FieldLabel = styled.label`
  color: #444;
  white-space: nowrap;
`;

const Field = styled.div`
  display: flex;
  width: ${(props) => props.$width}px;
  height: 25px;
  border: 1px solid #a0a0a0;
  border-radius: 3px;
  background-color: #fff;
`;

const Input = styled.input`
  flex: 1;
  min-width: 0;
  padding: 0 4px;
  border: 0;
  outline: 0;
  background: none;
  &::placeholder {
    color: #c6c6c6;
  }
`;

const FieldButton = styled(PlainButton)`
  width: 21px;
  align-items: center;
  justify-content: center;
  border-left: 1px solid #a0a0a0;
`;

const Lists = styled.div`
  flex: 1;
  min-height: 0;
  display: grid;
  grid-template-columns: minmax(0, 13fr) 10px minmax(0, 16fr);
`;

const Splitter = styled.div`
  width: 6px;
  border-right: 1px dashed #cfcfcf;
`;

const ListBox = styled.div`
  display: flex;
  flex-direction: column;
  border: 1px solid #a0a0a0;
`;

const ListBody = styled.div`
  flex: 1;
  min-height: 0;
  display: flex;
`;

const HTrack = styled.div`
  display: flex;
  align-items: center;
  height: 15px;
  padding: 0 26px 2px 8px;
`;

const HMark = styled.div`
  width: 1px;
  height: 4px;
  margin-left: ${(props) => (props.$end ? 'auto' : '0')};
  background-color: #ddd;
`;

const HThumb = styled.div`
  width: ${(props) => props.$share}%;
  height: 9px;
  margin-left: 11px;
  border-radius: 2px;
  background-color: #cacaca;
`;

const RightPanel = styled.section`
  flex: none;
  width: 482px;
  display: flex;
  flex-direction: column;
  padding: 16px 9px 20px 19px;
`;

const TodoBar = styled(Bar)`
  justify-content: space-between;
  margin-bottom: 10px;
  padding-right: 18px;
`;

const TodoArea = styled.div`
  flex: 1;
  min-height: 0;
  display: flex;
`;

const TodoList = styled.div`
  flex: 1;
  min-width: 0;
  overflow: hidden;
`;

const TodoGroup = styled.div`
  margin-bottom: 19px;
`;

const TodoTitle = styled.h3`
  margin: 0;
  font-size: 12px;
  line-height: 19px;
  color: #12804c;
`;

const TodoItem = styled.div`
  line-height: 29px;
`;

const TodoLink = styled.a`
  color: ${(props) => (props.$overdue ? '#8c3a3a' : '#4a5468')};
  text-underline-offset: 2px;
`;

const TabBar = styled.footer`
  display: flex;
  flex: none;
  height: 54px;
  background: linear-gradient(#dcdcdc, #f1f1f1 4px);
`;

const Tab = styled.button`
  padding: 0 10px 0 13px;
  border: solid #a0a0a0;
  border-width: 0 1px 0 0;
  background-color: #fff;
  box-shadow: inset 0 -4px 0 #20805a;
  color: #444;
`;

export default App;
